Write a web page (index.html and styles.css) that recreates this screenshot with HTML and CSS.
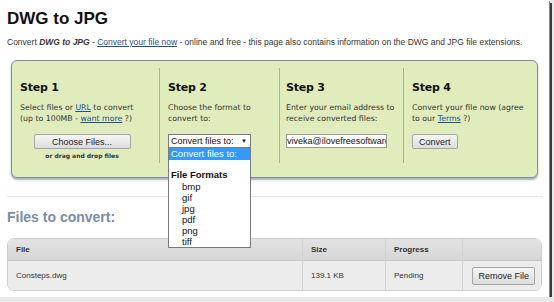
FILE: index.html
```html
<!DOCTYPE html>
<html lang="en">
<head>
  <meta charset="UTF-8" />
  <title>DWG to JPG</title>
  <link rel="stylesheet" href="styles.css">
</head>
<body>
  <div class="page">
    <h1>DWG to JPG</h1>
    <p class="intro">Convert <b><i>DWG to JPG</i></b> - <a href="#">Convert your file now</a> - online and free - this page also contains information on the DWG and JPG file extensions.</p>

    <div class="steps">
      <div class="step">
        <h3>Step 1</h3>
        <p>Select files or <a href="#">URL</a> to convert<br>(up to 100MB - <a href="#">want more</a> ?)</p>
        <div class="center">
          <button class="btn choose">Choose Files...</button>
          <div class="drop">or drag and drop files</div>
        </div>
      </div>
      <div class="step">
        <h3>Step 2</h3>
        <p>Choose the format to<br>convert to:</p>
        <div class="select-wrap">
          <div class="select">Convert files to: <span class="arrow">&#9660;</span></div>
          <ul class="options">
            <li class="active">Convert files to:</li>
            <li class="blank">&nbsp;</li>
            <li class="group">File Formats</li>
            <li class="opt">bmp</li>
            <li class="opt">gif</li>
            <li class="opt">jpg</li>
            <li class="opt">pdf</li>
            <li class="opt">png</li>
            <li class="opt">tiff</li>
          </ul>
        </div>
      </div>
      <div class="step">
        <h3>Step 3</h3>
        <p>Enter your email address to<br>receive converted files:</p>
        <input class="email" type="text" value="viveka@ilovefreesoftware.com" />
      </div>
      <div class="step">
        <h3>Step 4</h3>
        <p>Convert your file now (agree<br>to our <a href="#">Terms</a> ?)</p>
        <button class="btn convert">Convert</button>
      </div>
    </div>

    <hr class="sep" />

    <h2>Files to convert:</h2>

    <table class="files">
      <thead>
        <tr>
          <th class="c-file">File</th>
          <th class="c-size">Size</th>
          <th class="c-prog">Progress</th>
          <th class="c-act"></th>
        </tr>
      </thead>
      <tbody>
        <tr>
          <td>Consteps.dwg</td>
          <td>139.1 KB</td>
          <td>Pending</td>
          <td class="c-act"><button class="btn remove">Remove File</button></td>
        </tr>
      </tbody>
    </table>
  </div>
</body>
</html>
```

FILE: styles.css
```css
html, body {
  margin: 0;
  padding: 0;
  background: #e9e9e9;
}
.page {
  width: 549px;
  height: 297px;
  background: #fff;
  overflow: hidden;
  box-shadow: 1px 1px 0 #8a8a8a, 3px 3px 0 #3a3a3a;
  font-family: "Liberation Sans", Arial, sans-serif;
  color: #333;
  position: relative;
}
h1 {
  margin: 0;
  padding: 9px 0 0 7px;
  font-size: 17px;
  color: #111;
  line-height: 20px;
}
.intro {
  margin: 8px 0 0 7px;
  font-size: 8.5px;
  line-height: 10px;
  color: #333;
}
a {
  color: #1f4f8f;
}
.steps {
  margin: 13px 0 0 11px;
  width: 527px;
  height: 118px;
  box-sizing: border-box;
  background: #e1ecbc;
  border: 1px solid #7b8ea8;
  border-radius: 6px;
  box-shadow: 0 2px 2px rgba(60, 80, 110, 0.45);
  display: grid;
  grid-template-columns: 147px 120px 124px 1fr;
  padding: 7px 0 14px 0;
}
.step {
  padding: 0 6px 0 8px;
  border-left: 1px solid #a7ad9c;
}
.step:first-child {
  border-left: none;
}
.step:nth-child(3) {
  padding-left: 6px;
}
.step h3 {
  margin: 13px 0 0 0;
  font-family: "DejaVu Sans", Verdana, sans-serif;
  font-size: 11px;
  letter-spacing: -0.2px;
  line-height: 14px;
  color: #111;
}
.step p {
  margin: 7px 0 0 0;
  font-family: "DejaVu Sans", Verdana, sans-serif;
  font-size: 7.8px;
  line-height: 11px;
  height: 22px;
  white-space: nowrap;
  color: #333;
}
.center {
  width: 124px;
  text-align: center;
}
.btn {
  font-family: "Liberation Sans", Arial, sans-serif;
  font-size: 9px;
  color: #222;
  background: linear-gradient(#f6f6f6, #dcdcdc);
  border: 1px solid #a5a5a5;
  border-radius: 2px;
  padding: 0 6px;
  height: 15px;
  white-space: nowrap;
}
.choose {
  margin-top: 10px;
  width: 97px;
}
.drop {
  margin-top: 3px;
  font-family: "DejaVu Sans", Verdana, sans-serif;
  font-weight: bold;
  font-size: 6px;
  color: #333;
}
.select-wrap {
  position: relative;
  margin-top: 10px;
}
.select {
  width: 83px;
  height: 14px;
  box-sizing: border-box;
  border: 1px solid #7a7a7a;
  background: #fff;
  font-size: 9px;
  line-height: 12px;
  padding-left: 2px;
  color: #111;
  position: relative;
}
.arrow {
  position: absolute;
  right: 3px;
  top: 0;
  font-size: 6px;
}
.options {
  position: absolute;
  top: 14px;
  left: 0;
  width: 83px;
  box-sizing: border-box;
  margin: 0;
  padding: 0;
  list-style: none;
  background: #fff;
  border: 1px solid #7a7a7a;
  border-top: none;
  z-index: 5;
  font-size: 9.5px;
  line-height: 11px;
  color: #111;
}
.options li {
  padding-left: 2px;
}
.options .active {
  background: #3399ff;
  color: #fff;
  line-height: 12px;
}
.options .blank {
  height: 8px;
}
.options .group {
  font-weight: bold;
  line-height: 13px;
}
.options .opt {
  padding-left: 13px;
}
.email {
  margin-top: 10px;
  width: 101px;
  height: 14px;
  box-sizing: border-box;
  border: 1px solid #9a9a9a;
  padding: 0;
  font-family: "Liberation Sans", Arial, sans-serif;
  font-size: 9px;
  color: #111;
  background: #fff;
}
.convert {
  margin-top: 10px;
  height: 15px;
}
.sep {
  margin: 18px 6px 0 7px;
  border: none;
  border-top: 1px solid #e4e4e4;
}
h2 {
  margin: 12px 0 0 7px;
  font-size: 14px;
  line-height: 16px;
  color: #7b8ca6;
}
.files {
  margin: 13px 0 0 7px;
  width: 535px;
  border-collapse: separate;
  border-spacing: 0;
  border: 1px solid #cfcfcf;
  border-radius: 7px;
  overflow: hidden;
  font-size: 8px;
  color: #333;
}
.files th {
  text-align: left;
  font-weight: bold;
  background: linear-gradient(#e3e3e3, #d6d6d6);
  height: 21px;
  padding: 0 0 0 8px;
  border-bottom: 1px solid #c4c4c4;
}
.files td {
  background: #ececec;
  height: 29px;
  padding: 0 0 0 8px;
}
.files th + th,
.files td + td {
  border-left: 1px solid #d2d2d2;
}
.c-file {
  width: 286px;
}
.c-size {
  width: 74px;
}
.c-prog {
  width: 68px;
}
.files td.c-act {
  padding: 0 6px 0 6px;
  text-align: right;
}
.remove {
  height: 18px;
  font-size: 9px;
  padding: 0 5px;
}
```
